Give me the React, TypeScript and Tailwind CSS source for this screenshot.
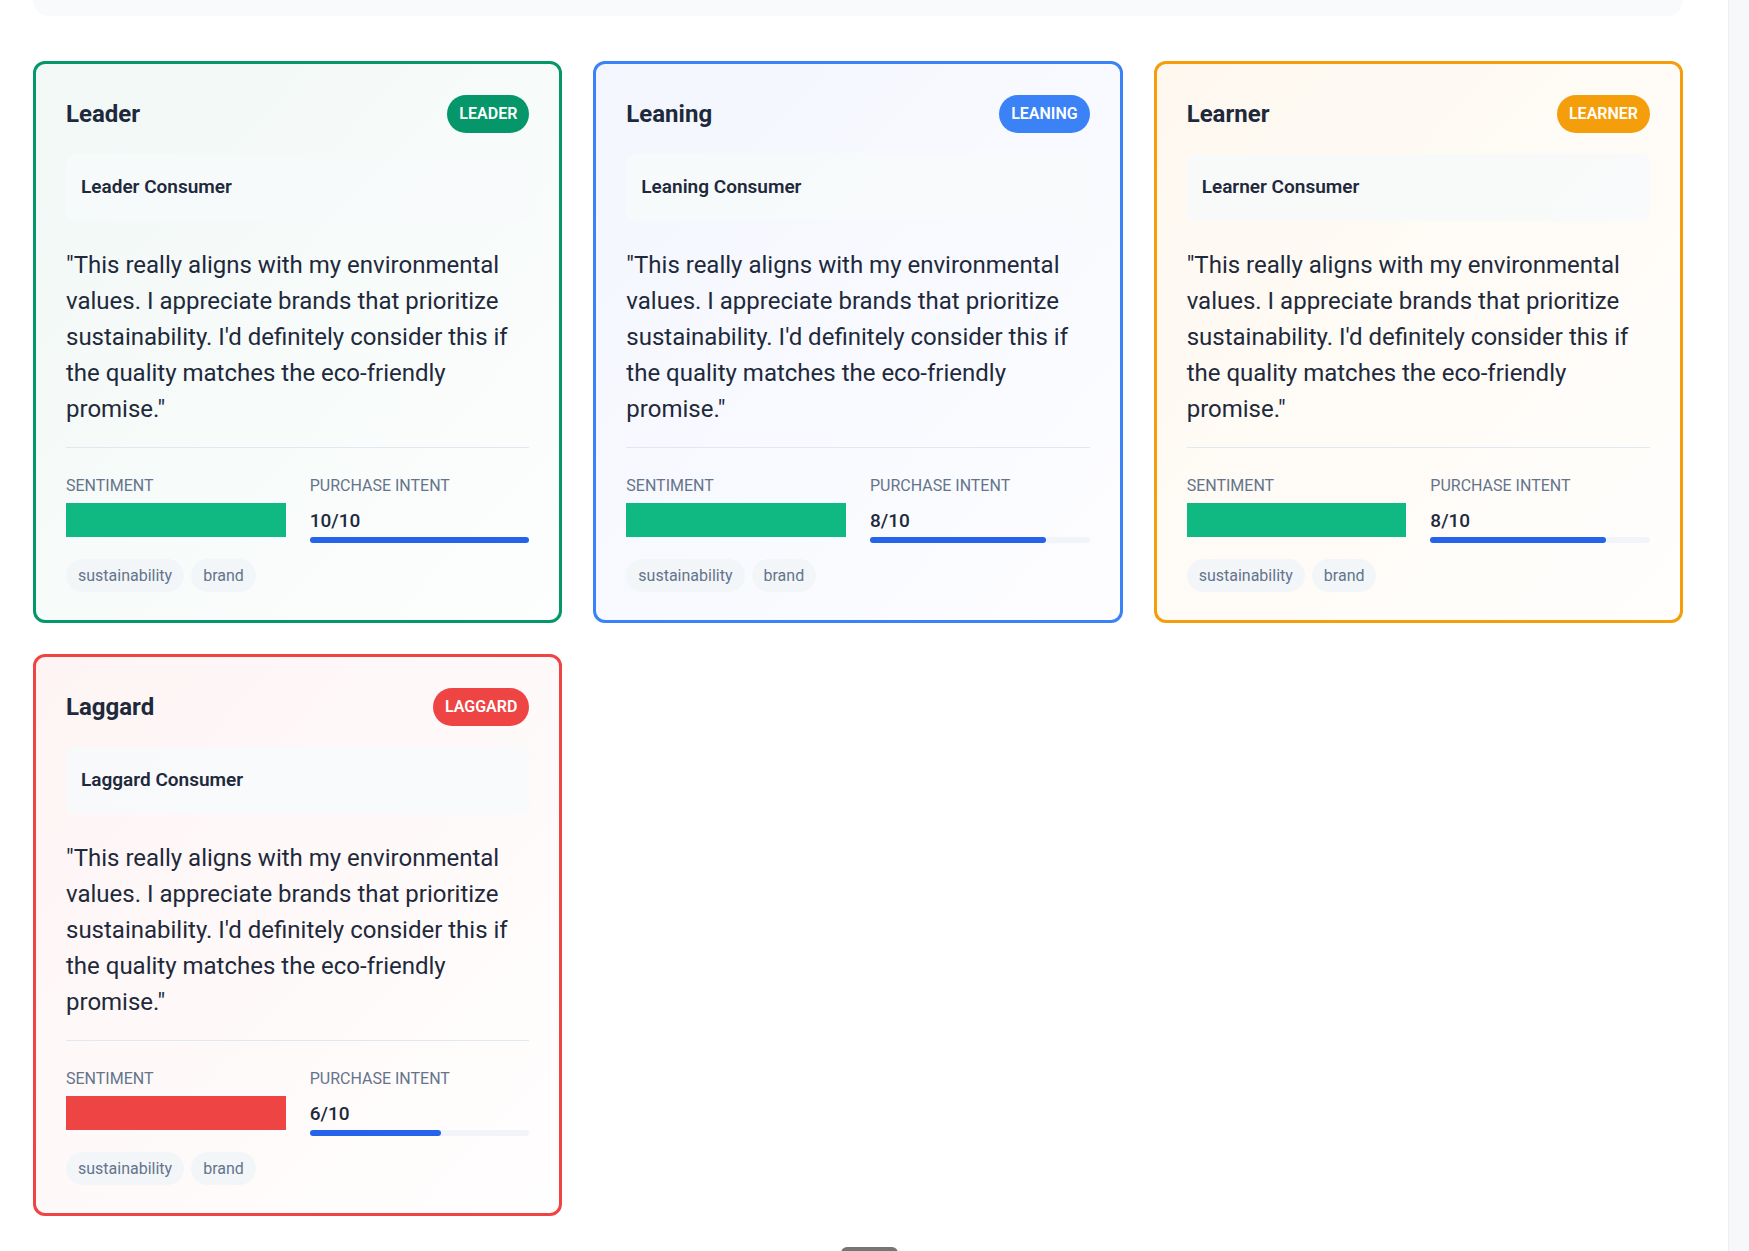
type Segment = {
  name: string
  badge: string
  consumer: string
  intent: number
  card: string
  pill: string
  sentimentBar: string
}

const quote =
  "\"This really aligns with my environmental values. I appreciate brands that prioritize sustainability. I'd definitely consider this if the quality matches the eco-friendly promise.\""

const segments: Segment[] = [
  {
    name: "Leader",
    badge: "LEADER",
    consumer: "Leader Consumer",
    intent: 10,
    card: "border-[#059669] bg-linear-to-br from-[#f1f8f6] to-[#fdfefe]",
    pill: "bg-[#059669]",
    sentimentBar: "bg-[#10b981]",
  },
  {
    name: "Leaning",
    badge: "LEANING",
    consumer: "Leaning Consumer",
    intent: 8,
    card: "border-[#3b82f6] bg-linear-to-br from-[#f3f6fe] to-[#fdfdff]",
    pill: "bg-[#3b82f6]",
    sentimentBar: "bg-[#10b981]",
  },
  {
    name: "Learner",
    badge: "LEARNER",
    consumer: "Learner Consumer",
    intent: 8,
    card: "border-[#f59e0b] bg-linear-to-br from-[#fef8ef] to-[#fffefd]",
    pill: "bg-[#f59e0b]",
    sentimentBar: "bg-[#10b981]",
  },
  {
    name: "Laggard",
    badge: "LAGGARD",
    consumer: "Laggard Consumer",
    intent: 6,
    card: "border-[#ef4444] bg-linear-to-br from-[#fef4f4] to-[#fffefe]",
    pill: "bg-[#ef4444]",
    sentimentBar: "bg-[#ef4444]",
  },
]

function SegmentCard({ s }: { s: Segment }) {
  return (
    <div className={`flex flex-col rounded-xl border-[3px] px-[30px] pt-[31px] pb-[28px] ${s.card}`}>
      <div className="flex h-[38px] items-center justify-between">
        <h3 className="text-[24px] font-bold text-[#1e293b]">{s.name}</h3>
        <span className={`flex h-[38px] items-center rounded-full px-3 text-[16px] font-semibold text-white ${s.pill}`}>
          {s.badge}
        </span>
      </div>

      <div className="mt-[21px] flex h-[67px] items-center rounded-lg bg-[#f7f9fb]/90 px-[15px]">
        <span className="text-[19px] font-semibold text-[#1e293b]">{s.consumer}</span>
      </div>

      <p className="mt-[26px] mb-5 text-[24px] leading-[36px] text-[#1e293b]">{quote}</p>

      <div className="border-t border-[#e2e8f0] pt-7">
        <div className="grid grid-cols-2 gap-6">
          <div className="flex flex-col">
            <span className="text-[16px] leading-5 text-[#64748b]">SENTIMENT</span>
            <div className={`mt-[7px] h-[34px] w-full ${s.sentimentBar}`} />
          </div>
          <div className="flex flex-col">
            <span className="text-[16px] leading-5 text-[#64748b]">PURCHASE INTENT</span>
            <span className="mt-[13px] text-[19px] leading-6 font-medium text-[#1e293b]">{s.intent}/10</span>
            <div className="mt-1 h-[6px] w-full rounded-full bg-[#f1f5f9]">
              <div className="h-full rounded-full bg-[#2563eb]" style={{ width: `${s.intent * 10}%` }} />
            </div>
          </div>
        </div>

        <div className="mt-4 flex gap-[7px]">
          <span className="flex h-[33px] items-center rounded-full bg-[#f3f6f9] px-3 text-[16px] text-[#64748b]">sustainability</span>
          <span className="flex h-[33px] items-center rounded-full bg-[#f3f6f9] px-3 text-[16px] text-[#64748b]">brand</span>
        </div>
      </div>
    </div>
  )
}

export default function App() {
  return (
    <div className="flex min-h-screen bg-white font-['Roboto',sans-serif]">
      <main className="flex-1 pr-[45px] pb-10 pl-[33px]">
        <div className="h-4 rounded-b-2xl bg-[#f8fafc]" />

        <div className="mt-[45px] grid grid-cols-3 gap-x-[31px] gap-y-[31px]">
          {segments.map((s) => (
            <SegmentCard key={s.name} s={s} />
          ))}
        </div>
      </main>

      <aside className="w-[21px] shrink-0 border-l border-[#eceef1] bg-[#f7f8fa]" />

      <div className="fixed top-[1247px] left-[841px] h-5 w-[57px] rounded-t-md bg-[#767676]" />
    </div>
  )
}
